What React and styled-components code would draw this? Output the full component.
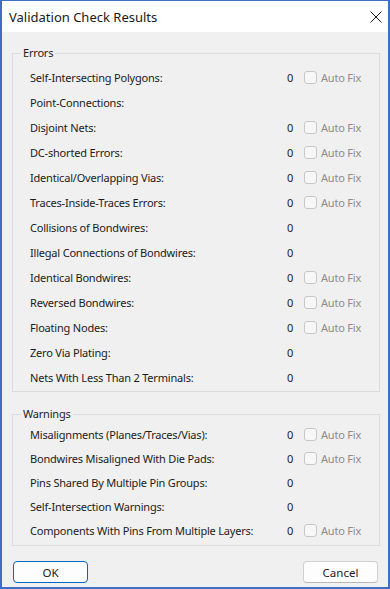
import React from "react";
import styled, { createGlobalStyle } from "styled-components";

const Global = createGlobalStyle`
  html, body { margin: 0; padding: 0; background: #f0f0f0; }
  * { box-sizing: border-box; }
  body { font-family: "Noto Sans", "Open Sans", Arial, sans-serif; }
`;

const Window = styled.div`
  width: 390px;
  height: 589px;
  display: flex;
  flex-direction: column;
  background: #f0f0f0;
  border-style: solid;
  border-color: #3f6fc4;
  border-width: 1px 2px 2px 2px;
  color: #1b1b1b;
  font-size: 11px;
  letter-spacing: -0.2px;
`;

const TitleBar = styled.div`
  height: 31px;
  flex: none;
  background: #ffffff;
  display: flex;
  align-items: center;
  justify-content: space-between;
  padding: 0 0 0 7px;
`;

const Title = styled.span`
  font-size: 13px;
  letter-spacing: 0;
  color: #1a1a1a;
`;

const CloseButton = styled.button`
  width: 24px;
  height: 28px;
  border: none;
  background: transparent;
  display: flex;
  align-items: center;
  justify-content: center;
  padding: 0;
`;

const Body = styled.div`
  flex: 1;
  display: flex;
  flex-direction: column;
  padding: 14px 8px 0 10px;
`;

const Group = styled.fieldset`
  margin: ${(p) => p.$mt || 0}px 0 0 0;
  padding: ${(p) => p.$pt}px 5px ${(p) => p.$pb}px 0;
  border: 1px solid #dcdcdc;
  border-radius: 0;
  min-width: 0;
`;

const Legend = styled.legend`
  margin-left: 8px;
  padding: 0 2px;
  font-size: 11px;
  line-height: 14px;
  color: #1b1b1b;
`;

const RowList = styled.div`
  display: flex;
  flex-direction: column;
  padding-left: 17px;
`;

const Row = styled.div`
  height: ${(p) => p.$h}px;
  display: flex;
  align-items: center;
`;

const Label = styled.span`
  flex: 1;
  white-space: nowrap;
`;

const Count = styled.span`
  width: 20px;
  text-align: right;
  color: #1b1b1b;
`;

const FixCell = styled.label`
  width: 70px;
  margin-left: 11px;
  display: flex;
  align-items: center;
  gap: 4px;
  color: #8c8c8c;
`;

const Box = styled.span`
  width: 13px;
  height: 13px;
  border: 1px solid #c8c8c8;
  border-radius: 3px;
  background: #f7f7f7;
  flex: none;
`;

const Footer = styled.div`
  display: flex;
  justify-content: space-between;
  padding: 15px 2px 0 1px;
`;

const Button = styled.button`
  width: 75px;
  height: 22px;
  border-radius: 4px;
  border: 1px solid ${(p) => (p.$primary ? "#0067c0" : "#d0d0d0")};
  border-bottom-color: ${(p) => (p.$primary ? "#0067c0" : "#b8b8b8")};
  background: #fdfdfd;
  font-family: inherit;
  font-size: 11.5px;
  color: #1b1b1b;
  padding: 0;
`;

const errors = [
  ["Self-Intersecting Polygons:", "0", true],
  ["Point-Connections:", "", false],
  ["Disjoint Nets:", "0", true],
  ["DC-shorted Errors:", "0", true],
  ["Identical/Overlapping Vias:", "0", true],
  ["Traces-Inside-Traces Errors:", "0", true],
  ["Collisions of Bondwires:", "0", false],
  ["Illegal Connections of Bondwires:", "0", false],
  ["Identical Bondwires:", "0", true],
  ["Reversed Bondwires:", "0", true],
  ["Floating Nodes:", "0", true],
  ["Zero Via Plating:", "0", false],
  ["Nets With Less Than 2 Terminals:", "0", false],
];

const warnings = [
  ["Misalignments (Planes/Traces/Vias):", "0", true],
  ["Bondwires Misaligned With Die Pads:", "0", true],
  ["Pins Shared By Multiple Pin Groups:", "0", false],
  ["Self-Intersection Warnings:", "0", false],
  ["Components With Pins From Multiple Layers:", "0", true],
];

function CheckRow({ label, count, fix, h }) {
  return (
    <Row $h={h}>
      <Label>{label}</Label>
      <Count>{count}</Count>
      <FixCell>
        {fix && (
          <>
            <Box />
            <span>Auto Fix</span>
          </>
        )}
      </FixCell>
    </Row>
  );
}

export default function App() {
  return (
    <>
      <Global />
      <Window>
        <TitleBar>
          <Title>Validation Check Results</Title>
          <CloseButton aria-label="Close">
            <svg width="12" height="12" viewBox="0 0 12 12">
              <path d="M0.5 0.5 L11.5 11.5 M11.5 0.5 L0.5 11.5" stroke="#1a1a1a" strokeWidth="1" fill="none" />
            </svg>
          </CloseButton>
        </TitleBar>
        <Body>
          <Group $pt={5} $pb={1}>
            <Legend>Errors</Legend>
            <RowList>
              {errors.map(([l, c, f]) => (
                <CheckRow key={l} label={l} count={c} fix={f} h={25} />
              ))}
            </RowList>
          </Group>
          <Group $mt={15} $pt={1} $pb={3}>
            <Legend>Warnings</Legend>
            <RowList>
              {warnings.map(([l, c, f]) => (
                <CheckRow key={l} label={l} count={c} fix={f} h={24} />
              ))}
            </RowList>
          </Group>
          <Footer>
            <Button $primary>OK</Button>
            <Button>Cancel</Button>
          </Footer>
        </Body>
      </Window>
    </>
  );
}
